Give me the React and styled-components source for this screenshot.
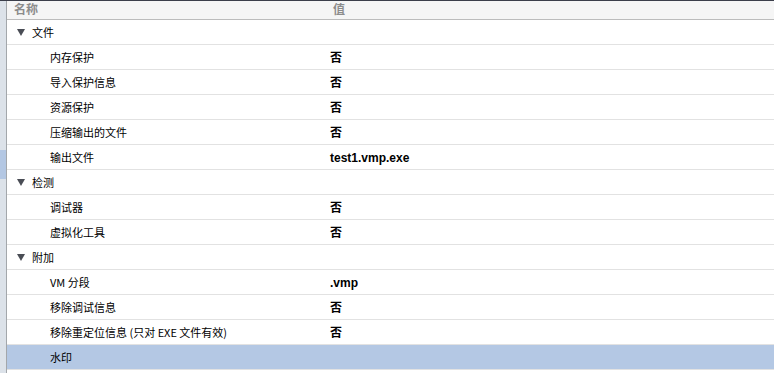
import React from 'react';
import styled, { createGlobalStyle } from 'styled-components';

const GlobalStyle = createGlobalStyle`
    html, body {
        margin: 0;
        padding: 0;
        background: #ffffff;
        overflow: hidden;
    }
    body {
        font-family: "Liberation Sans", "Noto Sans CJK SC", sans-serif;
        font-size: 11px;
        color: #000;
    }
`;

const Page = styled.div`
    border-top: 1px solid #3b3e4a;
    display: flex;
    height: 372px;
    width: 774px;
`;

const Gutter = styled.div`
    background-color: #dce2e9;
    border-right: 1px solid #a3a7ab;
    display: flex;
    flex-direction: column;
    flex: 0 0 6px;
    .marker {
        background-color: #b3c7e3;
        height: 29px;
        margin-top: 149px;
    }
`;

const Grid = styled.div`
    display: flex;
    flex: 1;
    flex-direction: column;
    min-width: 0;
`;

const Header = styled.div`
    background-color: #f5f5f5;
    border-bottom: 1px solid #bcbcbc;
    color: #8c8c8c;
    display: grid;
    font-size: 12px;
    font-weight: bold;
    grid-template-columns: 319px 1fr;
    height: 18px;
    line-height: 19px;
    span:first-child {
        padding-left: 7px;
    }
    span:last-child {
        padding-left: 7px;
    }
`;

const Row = styled.div`
    background-color: ${props => props.selected ? '#b4c8e4' : '#ffffff'};
    border-bottom: 1px solid #e2e2e2;
    box-sizing: border-box;
    display: grid;
    grid-template-columns: 319px 1fr;
    height: 25px;
    line-height: 26px;
`;

const Label = styled.div`
    align-items: center;
    display: flex;
    font-family: "Noto Sans CJK SC", "Liberation Sans", sans-serif;
    gap: 7px;
    height: 24px;
    line-height: 23px;
    padding-left: ${props => props.group ? '10px' : '43px'};
    white-space: nowrap;
`;

const Arrow = styled.span`
    border-left: 4px solid transparent;
    border-right: 4px solid transparent;
    border-top: 7px solid #4a4d55;
    height: 0;
    margin-top: 0;
    width: 0;
`;

const Value = styled.div`
    font-size: 12px;
    font-weight: bold;
    padding-left: 4px;
`;

const groups = [
    {
        name: '文件',
        items: [
            ['内存保护', '否'],
            ['导入保护信息', '否'],
            ['资源保护', '否'],
            ['压缩输出的文件', '否'],
            ['输出文件', 'test1.vmp.exe'],
        ],
    },
    {
        name: '检测',
        items: [
            ['调试器', '否'],
            ['虚拟化工具', '否'],
        ],
    },
    {
        name: '附加',
        items: [
            ['VM 分段', '.vmp'],
            ['移除调试信息', '否'],
            ['移除重定位信息 (只对 EXE 文件有效)', '否'],
            ['水印', ''],
        ],
    },
];

export default function App() {
    return (
        <>
            <GlobalStyle />
            <Page>
                <Gutter>
                    <div className="marker" />
                </Gutter>
                <Grid>
                    <Header>
                        <span>名称</span>
                        <span>值</span>
                    </Header>
                    {groups.map(group => (
                        <React.Fragment key={group.name}>
                            <Row>
                                <Label group>
                                    <Arrow />
                                    {group.name}
                                </Label>
                                <Value />
                            </Row>
                            {group.items.map(([label, value]) => (
                                <Row key={label} selected={label === '水印'}>
                                    <Label>{label}</Label>
                                    <Value>{value}</Value>
                                </Row>
                            ))}
                        </React.Fragment>
                    ))}
                </Grid>
            </Page>
        </>
    );
}
